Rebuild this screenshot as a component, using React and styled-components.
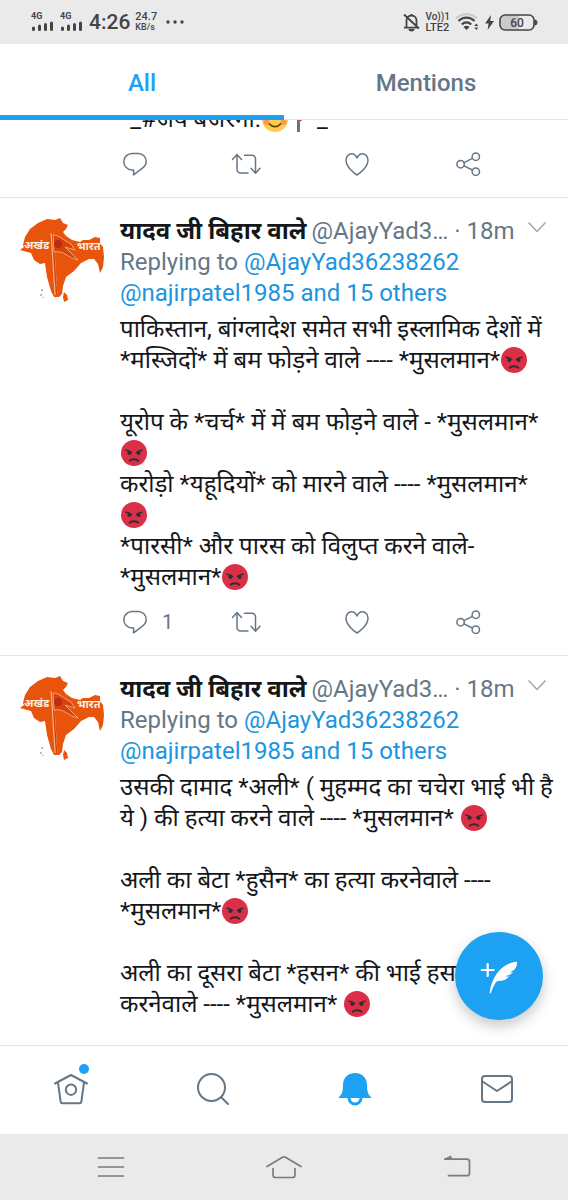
import React from 'react';
import styled, { createGlobalStyle } from 'styled-components';

const blue = '#1da1f2';
const slate = '#657786';
const ink = '#14171a';
const line = '#e1e5e8';

const GlobalStyle = createGlobalStyle`
  * { box-sizing: border-box; }
  body {
    margin: 0;
    background: #fff;
    color: ${ink};
    font-family: Roboto, "Noto Sans", "Noto Sans Devanagari", sans-serif;
  }
  button {
    margin: 0;
    padding: 0;
    border: 0;
    background: none;
    font: inherit;
    color: inherit;
    cursor: pointer;
  }
  svg { display: block; flex: none; }
`;

const Screen = styled.div`
  display: flex;
  flex-direction: column;
  height: 100vh;
  background: #fff;
`;

const StatusBar = styled.header`
  display: flex;
  justify-content: space-between;
  align-items: center;
  height: 44px;
  padding: 0 30px 0 31px;
  background: #eaeaea;
  color: #444;
  flex: none;
`;

const StatusGroup = styled.div`
  display: flex;
  align-items: center;
  gap: ${(p) => p.$gap}px;
`;

const Signal = styled.div`
  display: flex;
  flex-direction: column;
  font-size: 9px;
  line-height: 9px;
  font-weight: 700;
`;

const Clock = styled.time`
  font-size: 21px;
  line-height: 24px;
  font-weight: 500;
`;

const TinyStack = styled.div`
  display: flex;
  flex-direction: column;
  line-height: 11px;
  font-weight: 500;
`;

const Tiny = styled.span`
  font-size: ${(p) => p.$size}px;
`;

const Tabs = styled.nav`
  display: flex;
  height: 76px;
  flex: none;
  border-bottom: 1px solid ${line};
`;

const Tab = styled.button`
  && {
    flex: 1;
    height: 76px;
    padding-top: 7px;
    border-bottom: 5px solid ${(p) => (p.$active ? blue : 'transparent')};
    color: ${(p) => (p.$active ? blue : slate)};
    font-size: 24px;
    font-weight: 500;
  }
`;

const FeedArea = styled.main`
  position: relative;
  flex: 1;
  min-height: 0;
  overflow: hidden;
`;

const Feed = styled.div`
  margin-top: -16px;
`;

const Tweet = styled.article`
  display: flex;
  padding-top: ${(p) => (p.$continued ? 0 : 16)}px;
  border-bottom: 1px solid ${line};
`;

const AvatarColumn = styled.div`
  width: 120px;
  padding: 4px 0 0 20px;
  flex: none;
`;

const Body = styled.div`
  flex: 1;
  min-width: 0;
`;

const NameRow = styled.div`
  display: flex;
  align-items: center;
  height: 33px;
  padding-right: 22px;
  font-size: 24px;
  line-height: 32px;
  color: ${slate};
  white-space: pre;
`;

const Name = styled.strong`
  margin-right: 5px;
  font-weight: 700;
  color: ${ink};
`;

const MoreButton = styled.button`
  && {
    align-self: flex-start;
    margin-left: auto;
    padding-top: 8px;
  }
`;

const Replying = styled.p`
  margin: 0 0 5px;
  font-size: 24px;
  line-height: 31px;
  color: ${slate};
`;

const Mention = styled.a`
  color: #1b95e0;
  text-decoration: none;
`;

const Text = styled.p`
  margin: 0;
  font-size: 24px;
  line-height: 31px;
  white-space: pre;
`;

const EmojiBox = styled.svg`
  && {
    display: inline-block;
    width: 28px;
    height: 26px;
    vertical-align: -5px;
  }
`;

const Actions = styled.div`
  display: grid;
  grid-template-columns: repeat(4, 1fr);
  align-items: start;
  height: 62px;
  padding: 17px 4px 0 0;
  color: ${slate};
`;

const Action = styled.button`
  && {
    display: flex;
    align-items: center;
    gap: 12px;
    font-size: 20px;
    line-height: 24px;
  }
`;

const Compose = styled.button`
  && {
    position: absolute;
    right: 25px;
    bottom: 25px;
    display: grid;
    place-items: center;
    width: 88px;
    height: 88px;
    border-radius: 50%;
    background: ${blue};
    color: #fff;
    box-shadow: 0 6px 14px rgba(0, 0, 0, 0.22);
  }
`;

const BottomNav = styled.nav`
  display: grid;
  grid-template-columns: repeat(4, 1fr);
  height: 89px;
  padding-bottom: 2px;
  flex: none;
  border-top: 1px solid ${line};
  color: ${slate};
`;

const NavItem = styled.button`
  && {
    display: grid;
    place-items: center;
    color: ${(p) => (p.$active ? blue : slate)};
  }
`;

const NavIcon = styled.span`
  position: relative;
`;

const Dot = styled.span`
  position: absolute;
  top: -8px;
  right: 0;
  width: 10px;
  height: 10px;
  border-radius: 50%;
  background: ${blue};
`;

const SystemNav = styled.nav`
  display: grid;
  grid-template-columns: repeat(3, 1fr);
  height: 66px;
  padding: 0 24px;
  flex: none;
  background: #eaeaea;
  color: #7d7a7a;
`;

const SystemKey = styled.button`
  && {
    display: grid;
    place-items: center;
  }
`;

const Bars = () => (
  <svg width="24" height="11" viewBox="0 0 24 11" stroke="currentColor" strokeWidth="3" strokeLinecap="round">
    <path d="M2.5 7v1.5M8.500 5v3.500M14.500 3.500v5M20.500 2v6.500" />
  </svg>
);

const MutedBell = () => (
  <svg width="17" height="19" viewBox="0 0 17 19" fill="none" stroke="currentColor" strokeWidth="1.8">
    <path d="M3.500 14V7.500a5 5 0 0 1 10 0V14M1 14.600h15M8.500 1v2M1 1.500l15 14" />
    <path d="M5.500 16h6a3 2.400 0 0 1-6 0z" fill="currentColor" stroke="none" />
  </svg>
);

const Wifi = () => (
  <svg width="25" height="18" viewBox="0 0 25 18" fill="none" strokeWidth="2">
    <path d="M1 5.500a15 15 0 0 1 21 0" stroke="#c9c9c9" />
    <path d="M3.500 8a11 11 0 0 1 16 0M6.800 11.400a6.600 6.600 0 0 1 9.400 0" stroke="currentColor" strokeWidth="2.200" />
    <path d="M8.500 14a4.200 4.200 0 0 1 6 0l-3 3z" fill="currentColor" />
    <path d="M19.300 13l2-2.600 2 2.600zM19.300 14.500l2 2.600 2-2.600z" fill="currentColor" />
  </svg>
);

const Bolt = () => (
  <svg width="9" height="15" viewBox="0 0 9 15" fill="currentColor">
    <path d="M6 0L0 8.600h3.600L2.600 15 9 6H5.200z" />
  </svg>
);

const Battery = () => (
  <svg width="39" height="17" viewBox="0 0 39 17">
    <path d="M6 1.500h14v14H6a4.500 4.500 0 0 1-4.500-4.500V6A4.500 4.500 0 0 1 6 1.500z" fill="#cacaca" />
    <rect x="1" y="1" width="34" height="15" rx="5" fill="none" stroke="currentColor" strokeWidth="1.600" />
    <path d="M36 6a2 2.500 0 0 1 0 5z" fill="currentColor" stroke="currentColor" />
    <text x="18" y="12.500" textAnchor="middle" fontSize="12" fontWeight="500" fill="currentColor">60</text>
  </svg>
);

const Angry = () => (
  <EmojiBox viewBox="0 0 28 26" role="img" aria-label="angry face">
    <circle cx="14" cy="13" r="13" fill="#da2f47" />
    <g stroke="#292f33" strokeWidth="1.500" strokeLinecap="round" fill="none">
      <path d="M6 10.200c2 .1 4 1 5.500 2.300M22 10.200c-2 .1-4 1-5.500 2.300" />
      <path d="M9.800 20.700c1.800-2 6.600-2 8.400 0" strokeWidth="2" />
    </g>
    <circle cx="9.300" cy="13" r="1.900" fill="#292f33" />
    <circle cx="18.700" cy="13" r="1.900" fill="#292f33" />
  </EmojiBox>
);

const Smile = () => (
  <EmojiBox viewBox="0 0 28 26" role="img" aria-label="smiling face">
    <circle cx="14" cy="13" r="13" fill="#ffcc4d" />
    <circle cx="5.500" cy="16" r="3" fill="#ff7f5c" opacity="0.700" />
    <circle cx="22.500" cy="16" r="3" fill="#ff7f5c" opacity="0.700" />
    <g stroke="#664500" strokeWidth="1.800" strokeLinecap="round" fill="none">
      <path d="M7 12c1-2 3-2 4 0M17 12c1-2 3-2 4 0M8.500 18c3 3.600 8 3.600 11 0" />
    </g>
  </EmojiBox>
);

const Flag = () => (
  <EmojiBox viewBox="0 0 28 26" role="img" aria-label="red flag">
    <path d="M9 1l14 7-12 7.500z" fill="#dd2e44" />
    <path d="M8 0h3v26H8z" fill="#66757f" />
  </EmojiBox>
);

const icon = { width: 30, height: 24, viewBox: '0 0 30 24', fill: 'none', stroke: 'currentColor', strokeWidth: 1.5, strokeLinecap: 'round', strokeLinejoin: 'round' };

const ReplyIcon = () => (
  <svg {...icon}>
    <path d="M12 1.500h6.200a8 8 0 0 1 8 8c0 3.200-1.800 5.400-4.400 7.200l-8.200 6.200v-5H12a8.200 8.200 0 0 1 0-16.400z" />
  </svg>
);

const RetweetIcon = () => (
  <svg {...icon}>
    <path d="M1.500 7.500l4.500-5 4.500 5M6 3v14.500a3.500 3.500 0 0 0 3.500 3.500h7.500" />
    <path d="M13.500 3.200h7.500a3.500 3.500 0 0 1 3.500 3.500V21M20 16.300l4.500 5 4.500-5" />
  </svg>
);

const HeartIcon = () => (
  <svg {...icon}>
    <path d="M15 23C11 20.500 4 14.500 4 8.300 4 4.300 6.600 1.700 9.600 1.700c2.600 0 4.400 1.700 5.400 4.300 1-2.600 2.800-4.300 5.400-4.300 3 0 5.600 2.600 5.600 6.600C26 14.500 19 20.500 15 23z" />
  </svg>
);

const ShareIcon = () => (
  <svg {...icon}>
    <circle cx="7.600" cy="12.200" r="3.700" />
    <circle cx="22.800" cy="4.700" r="3.700" />
    <circle cx="22.800" cy="19.700" r="3.700" />
    <path d="M11 10.600l8.400-4.200M11 13.900l8.400 4.100" />
  </svg>
);

const Chevron = () => (
  <svg width="18" height="11" viewBox="0 0 18 11" fill="none" stroke="#9aa7b1" strokeWidth="1.500">
    <path d="M.500 .500L9 9.500 17.500 .500" />
  </svg>
);

const MapAvatar = () => (
  <svg width="85" height="85" viewBox="0 0 85 85" role="img" aria-label="अखंड भारत">
    <path
      fill="#e8540c"
      d="M0 32l4-3-1-2 2-8 5-8 8-6 9-4 8 1 5-2 3 5 5 2-2 4-3 3 3 4 6 4 8 2 3-2 6 0 6-3 5 1 0 5 3 4 1 10-1 10-3 6-2-9-4-5-5 0-8 4-7 8-8 6-3 9-1 8-3 3-5 0-3-6-4-14-2-14-5 1-6-4-3-7z"
    />
    <path fill="#e8540c" d="M44 74l3 3 1 5-4 2-1-5z" />
    <path d="M32 15l4 62" stroke="#f4b183" strokeWidth="3" />
    <path d="M32.500 15l4 62" stroke="#d2410a" strokeWidth="1.500" />
    <path d="M33 17c6 0 10 5 18 9l4 6-10-3 13 13c-10-2-14-10-24-8z" fill="#d8430c" stroke="#f2a673" strokeWidth="1" />
    <circle cx="38" cy="26" r="4" fill="#b92d14" />
    <g fill="#fdeee0" fontSize="11" fontWeight="700">
      <text x="4" y="31">अखंड</text>
      <text x="57" y="32">भारत</text>
    </g>
    <path d="M22 71v2M21 76v2M23 79v1" stroke="#777" />
  </svg>
);

const Feather = () => (
  <svg width="38" height="36" viewBox="0 0 38 36">
    <path d="M7.700 6v12M1.700 12h12" stroke="currentColor" strokeWidth="2.200" strokeLinecap="round" />
    <path
      fill="currentColor"
      d="M37 3.800C30 4.200 23.500 7.600 18.500 13.400 14 18.800 10.800 26 9.700 34.500c-.1 1.300 1 1.500 1.400.3 1-3.800 2.600-7.200 4.600-10.400 1-1.400 2.300-1.500 4-1.500 3.800 0 7.200-1.600 9.600-4.600-1.500.2-3 .1-4.200-.4 3.400-.3 6-1.400 8-3.600-1.200.2-2.200.1-3-.2C34.200 12.900 37.200 9.500 37 3.800z"
    />
  </svg>
);

const HomeIcon = () => (
  <svg width="36" height="34" viewBox="0 0 36 34" fill="none" stroke="currentColor" strokeWidth="2" strokeLinecap="round" strokeLinejoin="round">
    <path d="M2 11.500L18 3l16 8.500M5 10.500l2.600 19a2 2 0 0 0 2 1.700h16.800a2 2 0 0 0 2-1.700l2.600-19" />
    <circle cx="18" cy="17.700" r="5.200" />
  </svg>
);

const SearchIcon = () => (
  <svg width="34" height="34" viewBox="0 0 34 34" fill="none" stroke="currentColor" strokeWidth="2" strokeLinecap="round">
    <circle cx="15.500" cy="15.500" r="13.500" />
    <path d="M25 25l7 7" />
  </svg>
);

const BellIcon = () => (
  <svg width="34" height="34" viewBox="0 0 34 34" fill="currentColor">
    <path d="M17 1C9.500 1 5 6 5 13c0 6-1 9.500-4 12-.6.500-.4 1 .3 1h31.400c.7 0 .9-.5.3-1-3-2.500-4-6-4-12C29 6 24.500 1 17 1z" />
    <path d="M11 26a6 6 0 0 0 12 0" fill="#fff" stroke="currentColor" strokeWidth="3" />
  </svg>
);

const MailIcon = () => (
  <svg width="34" height="30" viewBox="0 0 34 30" fill="none" stroke="currentColor" strokeWidth="2" strokeLinejoin="round">
    <rect x="2" y="2" width="30" height="26" rx="3" />
    <path d="M2.500 7.500L17 17l14.500-9.500" />
  </svg>
);

const keyIcon = { fill: 'none', stroke: 'currentColor', strokeWidth: 1.7, strokeLinecap: 'round', strokeLinejoin: 'round' };

const MenuKey = () => (
  <svg width="28" height="22" viewBox="0 0 28 22" {...keyIcon}>
    <path d="M1.500 2h25M1.500 11h25M1.500 20h25" />
  </svg>
);

const HomeKey = () => (
  <svg width="36" height="24" viewBox="0 0 36 24" {...keyIcon}>
    <path d="M1 11.500L16.500 2.300q1.500-.8 3 0L35 11.500M7 13.500v6.500a2.500 2.500 0 0 0 2.500 2.500h17a2.500 2.500 0 0 0 2.500-2.500v-6.500" />
  </svg>
);

const BackKey = () => (
  <svg width="28" height="24" viewBox="0 0 28 24" {...keyIcon}>
    <path d="M2 4.200h22a2.500 2.500 0 0 1 2.500 2.500v11.500a2.500 2.500 0 0 1-2.500 2.500H5.500" />
    <path d="M1.500 4.200L8 1v3.200z" fill="currentColor" strokeWidth="1" />
  </svg>
);

const TweetActions = ({ replies }) => (
  <Actions>
    <Action aria-label="Reply"><ReplyIcon />{replies}</Action>
    <Action aria-label="Retweet"><RetweetIcon /></Action>
    <Action aria-label="Like"><HeartIcon /></Action>
    <Action aria-label="Share"><ShareIcon /></Action>
  </Actions>
);

const FullTweet = ({ children, replies }) => (
  <Tweet>
    <AvatarColumn><MapAvatar /></AvatarColumn>
    <Body>
      <NameRow>
        <Name>यादव जी बिहार वाले</Name>
        <span>@AjayYad3… · 18m</span>
        <MoreButton aria-label="More"><Chevron /></MoreButton>
      </NameRow>
      <Replying>
        Replying to <Mention href="#user">@AjayYad36238262</Mention>
        <br />
        <Mention href="#others">@najirpatel1985 and 15 others</Mention>
      </Replying>
      <Text>{children}</Text>
      <TweetActions replies={replies} />
    </Body>
  </Tweet>
);

export default function App() {
  return (
    <Screen>
      <GlobalStyle />
      <StatusBar>
        <StatusGroup $gap={5}>
          <Signal>4G<Bars /></Signal>
          <Signal>4G<Bars /></Signal>
          <Clock>4:26</Clock>
          <TinyStack><Tiny $size={11}>24.7</Tiny><Tiny $size={9}>KB/s</Tiny></TinyStack>
          <svg width="24" height="4" viewBox="0 0 24 4" fill="currentColor">
            <circle cx="6" cy="2" r="1.700" />
            <circle cx="13" cy="2" r="1.700" />
            <circle cx="20" cy="2" r="1.700" />
          </svg>
        </StatusGroup>
        <StatusGroup $gap={5}>
          <MutedBell />
          <TinyStack><Tiny $size={10}>Vo))1</Tiny><Tiny $size={11}>LTE2</Tiny></TinyStack>
          <Wifi />
          <Bolt />
          <Battery />
        </StatusGroup>
      </StatusBar>

      <Tabs>
        <Tab $active>All</Tab>
        <Tab>Mentions</Tab>
      </Tabs>

      <FeedArea>
        <Feed>
          <Tweet $continued>
            <AvatarColumn />
            <Body>
              <Text>*_#जय बजरंगी.<Smile /><Flag />_*</Text>
              <TweetActions />
            </Body>
          </Tweet>

          <FullTweet replies="1">
            {'पाकिस्तान, बांग्लादेश समेत सभी इस्लामिक देशों में\n*मस्जिदों* में बम फोड़ने वाले ---- *मुसलमान*'}<Angry />
            {'\n\nयूरोप के *चर्च* में में बम फोड़ने वाले - *मुसलमान*\n'}<Angry />
            {'\nकरोड़ो *यहूदियों* को मारने वाले ---- *मुसलमान*\n'}<Angry />
            {'\n*पारसी* और पारस को विलुप्त करने वाले-\n*मुसलमान*'}<Angry />
          </FullTweet>

          <FullTweet>
            {'उसकी दामाद *अली* ( मुहम्मद का चचेरा भाई भी है\nये ) की हत्या करने वाले ---- *मुसलमान* '}<Angry />
            {'\n\nअली का बेटा *हुसैन* का हत्या करनेवाले ----\n*मुसलमान*'}<Angry />
            {'\n\nअली का दूसरा बेटा *हसन* की भाई हसन\nकरनेवाले ---- *मुसलमान* '}<Angry />
            {'\n\n'}
          </FullTweet>
        </Feed>
        <Compose aria-label="Compose"><Feather /></Compose>
      </FeedArea>

      <BottomNav>
        <NavItem aria-label="Home"><NavIcon><HomeIcon /><Dot /></NavIcon></NavItem>
        <NavItem aria-label="Search"><NavIcon><SearchIcon /></NavIcon></NavItem>
        <NavItem $active aria-label="Notifications"><NavIcon><BellIcon /></NavIcon></NavItem>
        <NavItem aria-label="Messages"><NavIcon><MailIcon /></NavIcon></NavItem>
      </BottomNav>

      <SystemNav>
        <SystemKey aria-label="Recent apps"><MenuKey /></SystemKey>
        <SystemKey aria-label="Home screen"><HomeKey /></SystemKey>
        <SystemKey aria-label="Back"><BackKey /></SystemKey>
      </SystemNav>
    </Screen>
  );
}
